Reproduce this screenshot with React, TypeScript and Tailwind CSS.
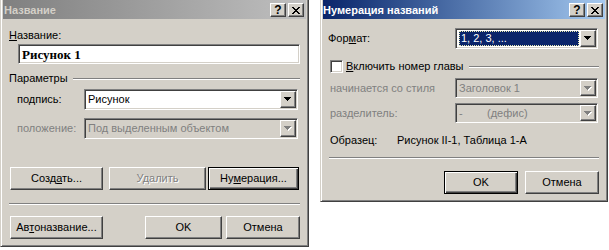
import React from 'react';

// Win2000 "classic" dialogs: Caption + Caption Numbering
const font = "font-['Liberation_Sans',Arial,sans-serif] text-[11px] leading-[13px]";
const raised =
  "border border-t-white border-l-white border-r-[#404040] border-b-[#404040] shadow-[inset_-1px_-1px_#808080]";
const sunken =
  "border border-t-[#808080] border-l-[#808080] border-r-white border-b-white shadow-[inset_1px_1px_#404040,inset_-1px_-1px_#d4d0c8]";

function U({ children }: { children: React.ReactNode }) {
  return <span className="underline decoration-1 underline-offset-[1px]">{children}</span>;
}

function Arrow({ disabled }: { disabled?: boolean }) {
  const d = "M0 0h7v1H0z M1 1h5v1H1z M2 2h3v1H2z M3 3h1v1H3z";
  return (
    <svg width="8" height="5" viewBox="0 0 8 5" shapeRendering="crispEdges">
      {disabled && <path d={d} fill="#ffffff" transform="translate(1 1)" />}
      <path d={d} fill={disabled ? '#808080' : '#000000'} />
    </svg>
  );
}

function CaptionButtons() {
  return (
    <div className="ml-auto mr-[2px] mt-[3px] flex gap-[2px] self-start">
      <div className={`flex h-[14px] w-[16px] items-center justify-center bg-[#d4d0c8] font-bold text-black ${raised}`}>
        <span className="text-[12px] leading-none font-['Liberation_Sans',Arial,sans-serif] font-bold">?</span>
      </div>
      <div className={`flex h-[14px] w-[16px] items-center justify-center bg-[#d4d0c8] ${raised}`}>
        <svg width="8" height="7" viewBox="0 0 8 7" shapeRendering="crispEdges">
          <path
            d="M0 0h2v1H0z M6 0h2v1H6z M1 1h2v1H1z M5 1h2v1H5z M2 2h4v1H2z M3 3h2v1H3z M2 4h4v1H2z M1 5h2v1H1z M5 5h2v1H5z M0 6h2v1H0z M6 6h2v1H6z"
            fill="#000"
          />
        </svg>
      </div>
    </div>
  );
}

function Button({
  children,
  width,
  isDefault,
  disabled,
}: {
  children: React.ReactNode;
  width: string;
  isDefault?: boolean;
  disabled?: boolean;
}) {
  const frame = isDefault
    ? 'border border-black shadow-[inset_1px_1px_#fff,inset_-1px_-1px_#404040,inset_-2px_-2px_#808080]'
    : raised;
  return (
    <div
      className={`flex h-[23px] items-center justify-center bg-[#d4d0c8] ${width} ${frame} ${
        disabled ? 'text-[#808080] [text-shadow:1px_1px_#fff]' : 'text-black'
      }`}
    >
      {children}
    </div>
  );
}

function Combo({
  value,
  width,
  height = 'h-[21px]',
  disabled,
}: {
  value: React.ReactNode;
  width: string;
  height?: string;
  disabled?: boolean;
}) {
  return (
    <div className={`flex ${height} ${width} ${sunken} p-[1px] ${disabled ? 'bg-[#d4d0c8]' : 'bg-white'}`}>
      <div className={`flex flex-1 items-center pl-[2px] ${disabled ? 'text-[#808080]' : 'text-black'}`}>{value}</div>
      <div className={`flex w-[16px] items-center justify-center bg-[#d4d0c8] ${raised}`}>
        <Arrow disabled={disabled} />
      </div>
    </div>
  );
}

function Etched({ className }: { className?: string }) {
  return <div className={`h-[2px] border-t border-t-[#808080] border-b border-b-white ${className ?? ''}`} />;
}

function Frame({ width, height, children }: { width: string; height: string; children: React.ReactNode }) {
  return (
    <div
      className={`flex flex-col ${width} ${height} bg-[#d4d0c8] px-[2px] border-l border-r border-b border-l-[#d4d0c8] border-r-[#404040] border-b-[#404040] shadow-[inset_1px_0_#fff,inset_-1px_-1px_#808080]`}
    >
      {children}
    </div>
  );
}

function CaptionDialog() {
  return (
    <Frame width="w-[309px]" height="h-[247px]">
      <div className="flex h-[19px] bg-gradient-to-r from-[#808080] to-[#c0c0c0]">
        <span className="pl-[1px] pt-[4px] font-bold text-[#d4d0c8] text-[11px] leading-[13px]">Название</span>
        <CaptionButtons />
      </div>

      <div className="flex w-[297px] flex-col pl-[6px]">
        <div className="mt-[10px]">
          <U>Н</U>азвание:
        </div>
        <div className={`ml-[9px] mt-[2px] flex h-[20px] w-[282px] items-center bg-white pl-[3px] ${sunken}`}>
          <span className="font-['Liberation_Serif','Times_New_Roman',serif] text-[13px] font-bold leading-none text-black">
            Рисунок 1
          </span>
        </div>

        <div className="mt-[8px] flex items-center gap-[5px]">
          <span>Параметры</span>
          <Etched className="flex-1" />
        </div>

        <div className="mt-[4px] flex items-center">
          <span className="w-[75px] pl-[8px]">
            по<U>д</U>пись:
          </span>
          <Combo value="Рисунок" width="w-[214px]" />
        </div>

        <div className="mt-[8px] flex items-center">
          <span className="w-[75px] pl-[8px] text-[#808080]">положение:</span>
          <Combo value="Под выделенным объектом" width="w-[214px]" disabled />
        </div>

        <div className="ml-[1px] mt-[28px] flex">
          <Button width="w-[93px]">
            <span>
              Созд<U>а</U>ть...
            </span>
          </Button>
          <div className="ml-[6px]">
            <Button width="w-[97px]" disabled>
              Удалить
            </Button>
          </div>
          <div className="ml-[2px]">
            <Button width="w-[91px]" isDefault>
              <span>
                Ну<U>м</U>ерация...
              </span>
            </Button>
          </div>
        </div>

        <Etched className="mt-[13px] w-[291px]" />

        <div className="ml-[1px] mt-[11px] flex">
          <Button width="w-[93px]">
            <span>
              Ав<U>т</U>оназвание...
            </span>
          </Button>
          <div className="ml-[42px]">
            <Button width="w-[77px]">OK</Button>
          </div>
          <div className="ml-[4px]">
            <Button width="w-[74px]">Отмена</Button>
          </div>
        </div>
      </div>
    </Frame>
  );
}

function NumberingDialog() {
  return (
    <Frame width="w-[288px]" height="h-[202px]">
      <div className="flex h-[19px] bg-gradient-to-r from-[#0a246a] to-[#a6caf0]">
        <span className="pl-[0px] pt-[4px] font-bold text-white text-[11px] leading-[13px]">Нумерация названий</span>
        <CaptionButtons />
      </div>

      <div className="flex w-[276px] flex-col pl-[5px]">
        <div className="mt-[9px] flex items-center">
          <span className="w-[127px]">
            Фор<U>м</U>ат:
          </span>
          <Combo
            width="w-[143px]"
            value={
              <div className="mr-[1px] flex h-[15px] flex-1 items-center border border-dotted border-[#e8e8b0] bg-[#0a246a] pl-[1px] text-white">
                1, 2, 3, ...
              </div>
            }
          />
        </div>

        <div className="mt-[11px] flex h-[13px] items-center pl-[2px]">
          <div className={`h-[13px] w-[13px] bg-white ${sunken}`} />
          <span className="ml-[3px]">
            <U>В</U>ключить номер главы
          </span>
          <Etched className="ml-[5px] flex-1" />
        </div>

        <div className="mt-[5px] flex items-center">
          <span className="w-[127px] pl-[2px] text-[#808080]">начинается со стиля</span>
          <Combo value="Заголовок 1" width="w-[143px]" height="h-[20px]" disabled />
        </div>

        <div className="mt-[5px] flex items-center">
          <span className="w-[127px] pl-[2px] text-[#808080]">разделитель:</span>
          <Combo
            value={
              <span className="flex">
                <span className="w-[28px]">-</span>
                <span>(дефис)</span>
              </span>
            }
            width="w-[143px]"
            height="h-[20px]"
            disabled
          />
        </div>

        <div className="mt-[11px] flex">
          <span className="w-[69px] pl-[2px]">Образец:</span>
          <span>Рисунок II-1, Таблица 1-А</span>
        </div>

        <Etched className="ml-[1px] mt-[10px] w-[270px]" />

        <div className="mt-[12px] flex">
          <div className="ml-[116px]">
            <Button width="w-[74px]" isDefault>
              OK
            </Button>
          </div>
          <div className="ml-[7px]">
            <Button width="w-[74px]">Отмена</Button>
          </div>
        </div>
      </div>
    </Frame>
  );
}

export default function App() {
  return (
    <div className={`flex h-[250px] w-[609px] items-start bg-white text-black ${font}`}>
      <CaptionDialog />
      <div className="ml-[11px]">
        <NumberingDialog />
      </div>
    </div>
  );
}
